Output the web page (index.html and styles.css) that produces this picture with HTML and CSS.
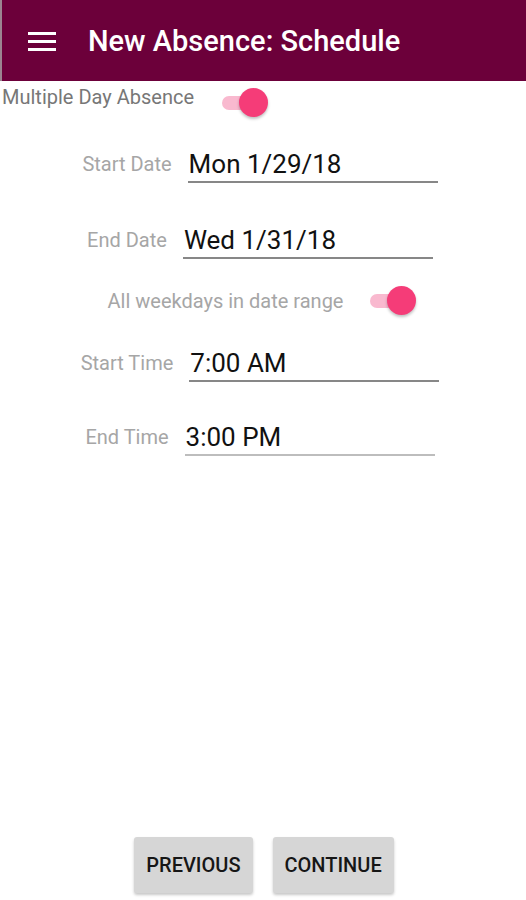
FILE: index.html
```html
<!DOCTYPE html>
<html>
<head>
<meta charset="utf-8">
<link rel="stylesheet" href="styles.css">
</head>
<body>
<div class="app">
  <header class="appbar">
    <svg class="menu" width="28" height="20" viewBox="0 0 28 20"><rect x="0" y="1" width="28" height="3" fill="#fff"/><rect x="0" y="9" width="28" height="3" fill="#fff"/><rect x="0" y="17" width="28" height="3" fill="#fff"/></svg>
    <h1 class="title">New Absence: Schedule</h1>
  </header>
  <div class="multi-row">
    <span class="multi-label">Multiple Day Absence</span>
    <span class="switch"><span class="track"></span><span class="knob"></span></span>
  </div>
  <section class="form">
    <div class="row r-start-date">
      <span class="label">Start Date</span>
      <span class="field">Mon 1/29/18</span>
    </div>
    <div class="row r-end-date">
      <span class="label">End Date</span>
      <span class="field">Wed 1/31/18</span>
    </div>
    <div class="row r-weekdays">
      <span class="label">All weekdays in date range</span>
      <span class="switch"><span class="track"></span><span class="knob"></span></span>
    </div>
    <div class="row r-start-time">
      <span class="label">Start Time</span>
      <span class="field">7:00 AM</span>
    </div>
    <div class="row r-end-time">
      <span class="label">End Time</span>
      <span class="field field-light">3:00 PM</span>
    </div>
  </section>
  <footer class="actions">
    <button class="btn">PREVIOUS</button>
    <button class="btn">CONTINUE</button>
  </footer>
</div>
</body>
</html>
```
FILE: styles.css
```css
* { box-sizing: border-box; }
html, body { margin: 0; padding: 0; background: #fff; }
body { font-family: Roboto, "Noto Sans", sans-serif; }
.app { display: flex; flex-direction: column; min-height: 900px; }
.appbar {
  height: 81px;
  background: #6c003a;
  border-left: 2px solid #9c8590;
  display: flex;
  align-items: center;
  padding-left: 26px;
  gap: 32px;
}
.menu { display: block; margin-top: 1px; }
.title {
  margin: 0;
  color: #fff;
  font-size: 29px;
  font-weight: 500;
  line-height: 32px;
}
.multi-row {
  display: flex;
  align-items: flex-start;
  padding-left: 2px;
  margin-top: 6px;
  gap: 28px;
}
.multi-label { color: #777; font-size: 20px; line-height: 20px; }
.switch { position: relative; width: 46px; height: 30px; flex: none; }
.multi-row .switch { margin-top: 1px; }
.track {
  position: absolute; left: 0; top: 8px;
  width: 40px; height: 14px; border-radius: 7px;
  background: #f9b9cf;
}
.knob {
  position: absolute; right: 0; top: 0;
  width: 29px; height: 29px; border-radius: 50%;
  background: #f53c78;
  box-shadow: 0 2px 3px rgba(0,0,0,0.25);
}
.form { display: flex; flex-direction: column; padding-right: 6px; }
.row { display: flex; align-items: center; justify-content: center; gap: 16px; }
.label { color: #a6a6a6; font-size: 20px; line-height: 22px; }
.field {
  width: 250px;
  font-size: 26px;
  line-height: 30px;
  padding: 4px 0 2px 1px;
  color: #111;
  border-bottom: 2px solid #878787;
}
.field-light { border-bottom-color: #bdbdbd; }
.r-start-date { margin-top: 27px; }
.r-end-date { margin-top: 38px; }
.r-weekdays { margin-top: 27px; gap: 27px; padding-left: 4px; }
.r-start-time { margin-top: 28px; }
.r-end-time { margin-top: 36px; }
.actions {
  margin-top: auto;
  display: flex;
  justify-content: center;
  gap: 20px;
  padding: 0 0 7px 2px;
}
.btn {
  height: 56px;
  padding: 0 12px;
  border: none;
  border-radius: 3px;
  background: #d6d6d6;
  color: #161616;
  font-family: Roboto, sans-serif;
  font-size: 20px;
  font-weight: 500;
  box-shadow: 0 2px 3px rgba(0,0,0,0.22);
}
```
